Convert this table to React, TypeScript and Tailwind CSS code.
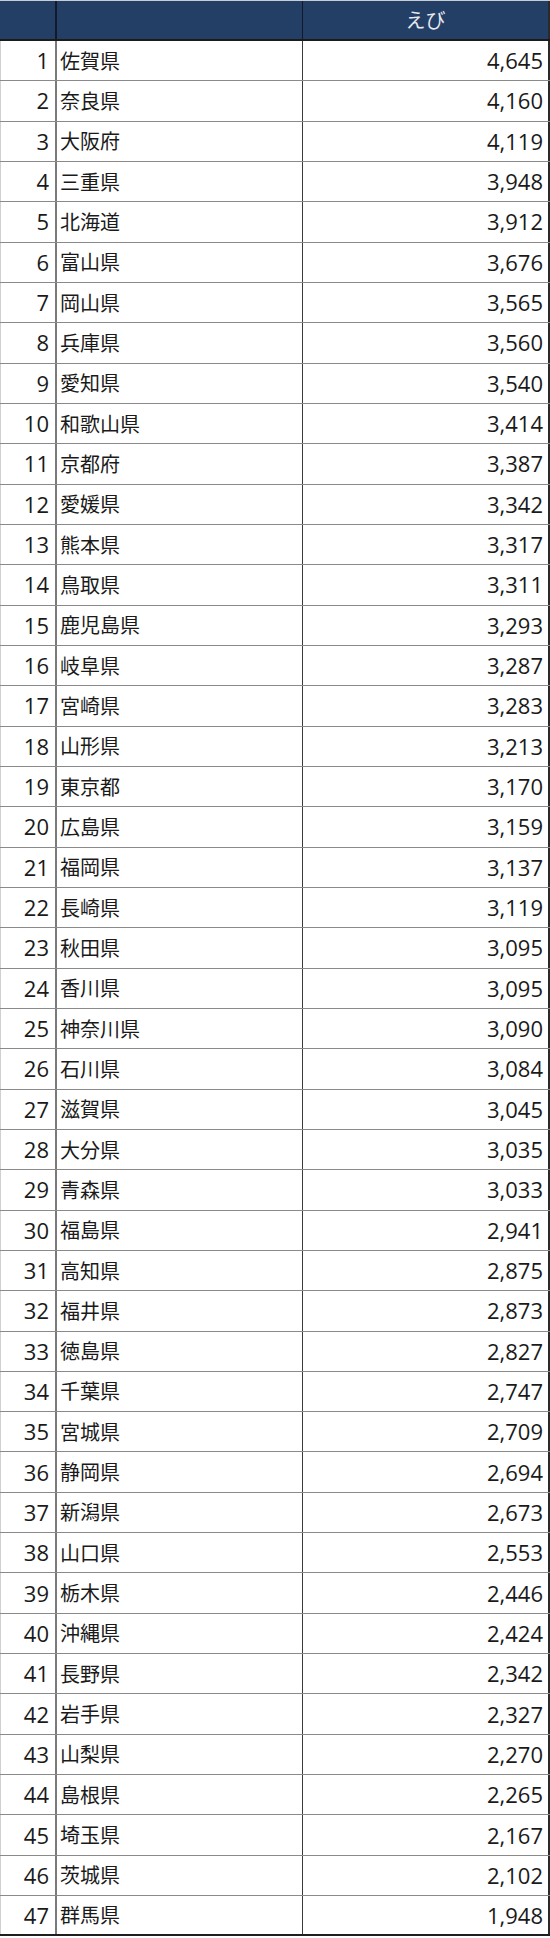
const rows: [string, string][] = [
  ['佐賀県', '4,645'],
  ['奈良県', '4,160'],
  ['大阪府', '4,119'],
  ['三重県', '3,948'],
  ['北海道', '3,912'],
  ['富山県', '3,676'],
  ['岡山県', '3,565'],
  ['兵庫県', '3,560'],
  ['愛知県', '3,540'],
  ['和歌山県', '3,414'],
  ['京都府', '3,387'],
  ['愛媛県', '3,342'],
  ['熊本県', '3,317'],
  ['鳥取県', '3,311'],
  ['鹿児島県', '3,293'],
  ['岐阜県', '3,287'],
  ['宮崎県', '3,283'],
  ['山形県', '3,213'],
  ['東京都', '3,170'],
  ['広島県', '3,159'],
  ['福岡県', '3,137'],
  ['長崎県', '3,119'],
  ['秋田県', '3,095'],
  ['香川県', '3,095'],
  ['神奈川県', '3,090'],
  ['石川県', '3,084'],
  ['滋賀県', '3,045'],
  ['大分県', '3,035'],
  ['青森県', '3,033'],
  ['福島県', '2,941'],
  ['高知県', '2,875'],
  ['福井県', '2,873'],
  ['徳島県', '2,827'],
  ['千葉県', '2,747'],
  ['宮城県', '2,709'],
  ['静岡県', '2,694'],
  ['新潟県', '2,673'],
  ['山口県', '2,553'],
  ['栃木県', '2,446'],
  ['沖縄県', '2,424'],
  ['長野県', '2,342'],
  ['岩手県', '2,327'],
  ['山梨県', '2,270'],
  ['島根県', '2,265'],
  ['埼玉県', '2,167'],
  ['茨城県', '2,102'],
  ['群馬県', '1,948'],
];

const num = "font-['Open_Sans','Noto_Sans',sans-serif] text-[22px]";
const jp = "font-['Noto_Sans_CJK_JP',sans-serif] text-[20px]";

export default function App() {
  return (
    <div className="w-[550px] bg-white text-[#1a1a1a]">
      {/* 見出し行 */}
      <div className="flex h-[41px] border-t border-b-2 border-t-[#c9ccd2] border-b-[#1b1b1b] bg-[#243f66]">
        <div className="w-[55px] shrink-0" />
        <div className="w-[2px] shrink-0 bg-[#101a2a]" />
        <div className="w-[245px] shrink-0" />
        <div className="w-px shrink-0 bg-[#101a2a]" />
        <div className={`flex flex-1 items-center justify-center text-[#e6eaf0] ${jp}`}>えび</div>
        <div className="w-[2px] shrink-0 bg-[#2a2a2a]" />
      </div>
      {rows.map(([name, value], i) => (
        <div
          key={name}
          className={`flex h-[40.34px] border-b ${i === rows.length - 1 ? 'border-b-2 border-[#1f1f1f]' : 'border-[#8a8a8a]'}`}
        >
          <div className={`flex w-[55px] shrink-0 items-center justify-end border-l border-[#d0d0d0] pr-[6px] ${num}`}>
            {i + 1}
          </div>
          <div className="w-[2px] shrink-0 bg-[#7a7a7a]" />
          <div className={`flex w-[245px] shrink-0 items-center pl-[3px] ${jp}`}>{name}</div>
          <div className="w-px shrink-0 bg-[#3a3a3a]" />
          <div className={`flex flex-1 items-center justify-end pr-[5px] ${num}`}>{value}</div>
          <div className="w-[2px] shrink-0 bg-[#2a2a2a]" />
        </div>
      ))}
    </div>
  );
}
